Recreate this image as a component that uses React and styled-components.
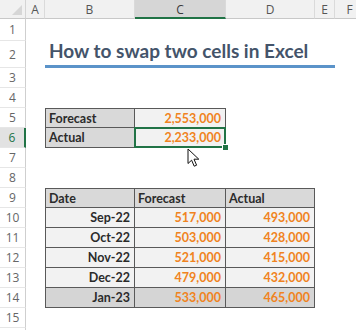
import React from 'react';
import styled, { createGlobalStyle, css } from 'styled-components';

const GlobalStyle = createGlobalStyle`
  html, body {
    margin: 0;
    padding: 0;
    background: #fff;
    overflow: hidden;
  }
  body {
    font-family: Lato, "Liberation Sans", sans-serif;
  }
`;

const GREEN = '#217346';
const ORANGE = '#f08321';

const columns = [
  { name: 'A', width: 19 },
  { name: 'B', width: 90 },
  { name: 'C', width: 91, active: true },
  { name: 'D', width: 89 },
  { name: 'E', width: 20 },
  { name: 'F', width: 30 },
];

const rowHeights = [22, 27, 20, 20, 20, 20, 20, 20, 20, 20, 20, 20, 20, 20, 20];
const activeRow = 6;

const months = [
  ['Sep-22', '517,000', '493,000'],
  ['Oct-22', '503,000', '428,000'],
  ['Nov-22', '521,000', '415,000'],
  ['Dec-22', '479,000', '432,000'],
  ['Jan-23', '533,000', '465,000'],
];

// cell contents keyed by address
const cells = {
  B5: { text: 'Forecast', fill: 'dark', top: true, left: true },
  C5: { text: '2,553,000', fill: 'light', num: true, top: true },
  B6: { text: 'Actual', fill: 'dark', left: true },
  C6: { text: '2,233,000', fill: 'light', num: true, selected: true },
  B9: { text: 'Date', fill: 'dark', top: true, left: true },
  C9: { text: 'Forecast', fill: 'dark', top: true },
  D9: { text: 'Actual', fill: 'dark', top: true },
};

months.forEach(([date, forecast, actual], i) => {
  const row = 10 + i;
  const fill = i === months.length - 1 ? 'total' : 'light';
  cells[`B${row}`] = { text: date, fill, left: true, right: true };
  cells[`C${row}`] = { text: forecast, fill, num: true };
  cells[`D${row}`] = { text: actual, fill, num: true };
});

const fills = {
  dark: '#d9d9d9',
  light: '#f2f2f2',
  total: '#d5d5d5',
};

const Sheet = styled.div`
  position: relative;
  width: 356px;
  height: 330px;
  overflow: hidden;
  display: grid;
  grid-template-columns: 26px ${columns.map(c => `${c.width}px`).join(' ')};
  grid-template-rows: 19px ${rowHeights.map(h => `${h}px`).join(' ')} 1fr;
`;

const Corner = styled.div`
  background: #f1f1f1;
  border-bottom: 1px solid #c8c8c8;
  border-right: 1px solid #d4d4d4;
  box-sizing: border-box;
  display: flex;
  justify-content: flex-end;
  align-items: flex-end;
  padding: 0 3px 3px 0;
`;

const Triangle = styled.div`
  width: 0;
  height: 0;
  border-left: 10px solid transparent;
  border-bottom: 10px solid #d6d6d6;
`;

const ColHead = styled.div`
  box-sizing: border-box;
  background: ${p => (p.$active ? '#d6d6d6' : '#f1f1f1')};
  border-right: 1px solid #dadada;
  border-bottom: ${p => (p.$active ? `2px solid ${GREEN}` : '1px solid #c8c8c8')};
  display: flex;
  align-items: center;
  justify-content: center;
  padding-top: ${p => (p.$active ? '1px' : '0')};
  font-family: "Open Sans", "Noto Sans", sans-serif;
  font-size: 12px;
  color: ${p => (p.$active ? '#3a3a3a' : '#555')};
`;

const RowHead = styled.div`
  box-sizing: border-box;
  background: ${p => (p.$active ? '#e2e2e2' : '#fff')};
  border-bottom: 1px solid #e6e6e6;
  border-right: ${p => (p.$active ? `2px solid ${GREEN}` : '1px solid #cfcfcf')};
  display: flex;
  align-items: center;
  justify-content: center;
  font-family: "Open Sans", "Noto Sans", sans-serif;
  font-size: 12px;
  color: ${p => (p.$active ? GREEN : '#666')};
`;

const Title = styled.div`
  grid-column: span 4;
  box-sizing: border-box;
  border-bottom: 3px solid #5b93c9;
  display: flex;
  align-items: flex-end;
  padding: 0 0 3px 4px;
  font-size: 19px;
  font-weight: 700;
  color: #44546a;
  white-space: nowrap;
`;

const Cell = styled.div`
  position: relative;
  box-sizing: border-box;
  display: flex;
  align-items: center;
  white-space: nowrap;
  font-size: 12.5px;
  font-weight: 700;
  ${p =>
    p.$fill &&
    css`
      background: ${fills[p.$fill]};
      border-right: 1px solid #595959;
      border-bottom: 1px solid #595959;
      border-top: ${p.$top ? '1px solid #595959' : 'none'};
      border-left: ${p.$left ? '1px solid #595959' : 'none'};
    `}
  justify-content: ${p => (p.$num || p.$right ? 'flex-end' : 'flex-start')};
  padding: ${p => (p.$num || p.$right ? '0 4px 0 0' : '0 0 0 3px')};
  color: ${p => (p.$num ? ORANGE : '#2b2b2b')};

  ${p =>
    p.$selected &&
    css`
      &::after {
        content: '';
        position: absolute;
        inset: -1px;
        border: 2px solid ${GREEN};
      }
      &::before {
        content: '';
        position: absolute;
        right: -4px;
        bottom: -4px;
        width: 5px;
        height: 5px;
        background: ${GREEN};
        border: 1px solid #fff;
        z-index: 2;
      }
    `}
`;

const Filler = styled.div`
  border-right: 1px solid #cfcfcf;
`;

const Pointer = styled.svg`
  position: absolute;
  left: 187px;
  top: 148px;
  width: 14px;
  height: 20px;
`;

const SheetRow = ({ row }) => {
  if (row === 2) {
    return (
      <>
        <RowHead>{row}</RowHead>
        <Cell />
        <Title>How to swap two cells in Excel</Title>
        <Cell />
      </>
    );
  }
  return (
    <>
      <RowHead $active={row === activeRow}>{row}</RowHead>
      {columns.map(col => {
        const c = cells[`${col.name}${row}`];
        if (!c) return <Cell key={col.name} />;
        return (
          <Cell
            key={col.name}
            $fill={c.fill}
            $top={c.top}
            $left={c.left}
            $num={c.num}
            $right={c.right}
            $selected={c.selected}
          >
            {c.text}
          </Cell>
        );
      })}
    </>
  );
};

export default function App() {
  return (
    <>
      <GlobalStyle />
      <Sheet>
        <Corner>
          <Triangle />
        </Corner>
        {columns.map(col => (
          <ColHead key={col.name} $active={col.active}>
            {col.name}
          </ColHead>
        ))}
        {rowHeights.map((_, i) => (
          <SheetRow key={i} row={i + 1} />
        ))}
        <Filler />
        <Pointer viewBox="0 0 14 20">
          <path
            d="M1 1 L1 15.5 L4.6 12.2 L7.2 18.2 L9.6 17.2 L7 11.2 L11.8 11.2 Z"
            fill="#fff"
            stroke="#111"
            strokeWidth="1"
            strokeLinejoin="round"
          />
        </Pointer>
      </Sheet>
    </>
  );
}
